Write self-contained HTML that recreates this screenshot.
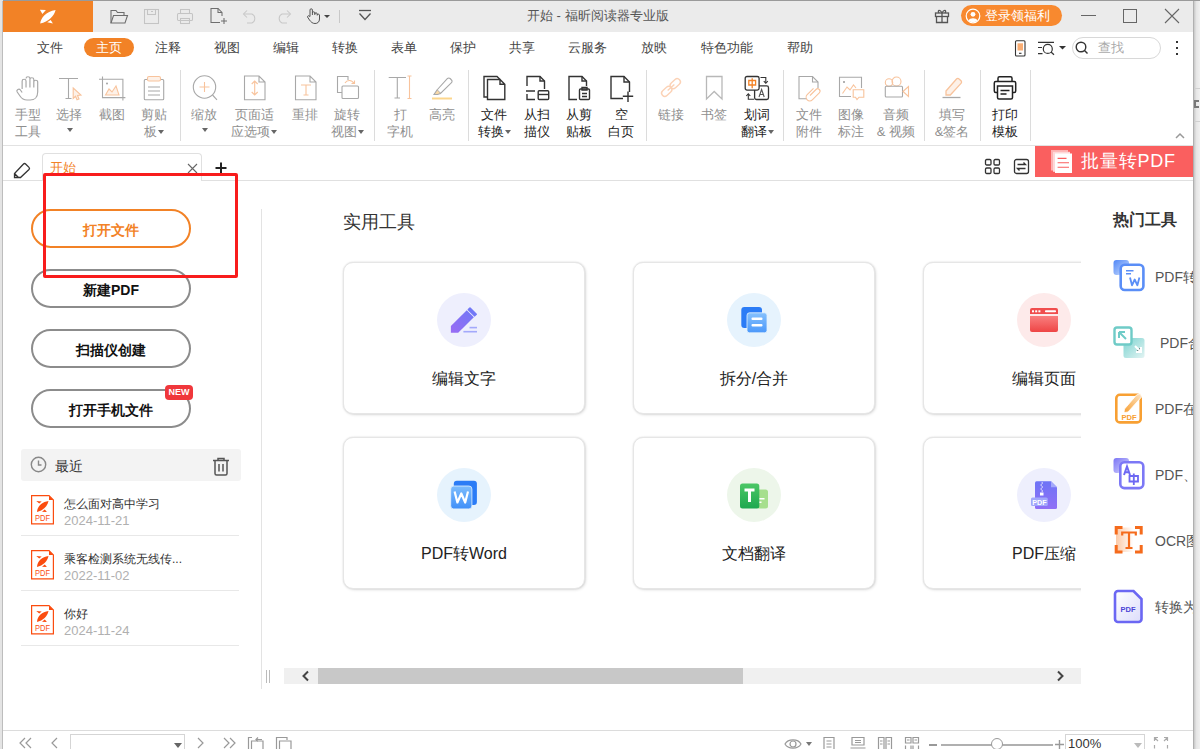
<!DOCTYPE html>
<html><head><meta charset="utf-8">
<style>
*{margin:0;padding:0;box-sizing:border-box}
html,body{width:1200px;height:749px;overflow:hidden;background:#f2f2f2;font-family:"Liberation Sans",sans-serif;color:#333}
.a{position:absolute}
.t{position:absolute;white-space:nowrap;line-height:1}
#win{position:absolute;left:3px;top:1px;width:1190px;height:748px;background:#fff;overflow:hidden}
#title{position:absolute;left:0;top:0;width:1190px;height:30px;background:#ebebeb}
#logo{position:absolute;left:0;top:0;width:90px;height:30px;background:#f28226}
.menu{font-size:13px;color:#444;top:41px}
.sep{position:absolute;width:1px;background:#dcdcdc;top:70px;height:71px}
.rl{position:absolute;font-size:13px;line-height:17px;text-align:center;color:#8f8f8f;white-space:nowrap}
.rl.on{color:#222}
.dd{display:inline-block;width:0;height:0;border-left:3.5px solid transparent;border-right:3.5px solid transparent;border-top:4px solid #666;vertical-align:middle;margin-left:1px;position:relative;top:-1px}
.card{position:absolute;width:242px;height:152px;border:1px solid #e6e6e6;border-radius:10px;background:#fff;box-shadow:0 0 2px rgba(0,0,0,.12),1px 1px 3px rgba(0,0,0,.12)}
.circ{position:absolute;left:93px;top:30px;width:54px;height:54px;border-radius:50%}
.clab{position:absolute;left:0;width:240px;top:107px;text-align:center;font-size:16px;color:#222;line-height:18px}
.btn{position:absolute;left:28px;width:160px;height:39px;border:2px solid #8c8c8c;border-radius:20px;text-align:center;font-size:14px;font-weight:bold;color:#111;line-height:38px}
.ri{position:absolute;left:18px;width:218px;height:55px;border-bottom:1px solid #e8e8e8}
.rt{position:absolute;left:43px;top:16px;font-size:12px;color:#333;line-height:14px;white-space:nowrap}
.rd{position:absolute;left:43px;top:33px;font-size:13px;color:#b0b0b0;line-height:14px;white-space:nowrap}
.hot{position:absolute;left:1110px;width:40px;height:40px}
.hl{position:absolute;left:1155px;font-size:14px;color:#555;line-height:16px;white-space:nowrap}
</style></head><body>
<!-- window bg -->
<div class="a" style="left:0;top:0;width:1200px;height:1px;background:#9a9a9a"></div>
<div class="a" style="left:0;top:0;width:3px;height:749px;background:#e4e4e4"></div>
<div class="a" style="left:2px;top:1px;width:1px;height:748px;background:#bdbdbd"></div>
<div class="a" style="left:3px;top:1px;width:1190px;height:748px;background:#fff"></div>
<div class="a" style="left:1193px;top:1px;width:1px;height:748px;background:#b0b0b0"></div>
<div class="a" style="left:1194px;top:1px;width:6px;height:748px;background:#f4f4f4"></div>
<!-- title bar -->
<div class="a" style="left:3px;top:1px;width:1190px;height:31px;background:#ebebeb"></div>
<div class="a" style="left:3px;top:1px;width:90px;height:31px;background:#f28226"></div>
<svg class="a" style="left:33px;top:3px" width="30" height="26" viewBox="0 0 30 26">
 <path d="M6.9 6.7 L12.9 7.1 L9.4 10.9 Z M14.2 19.2 L17.7 17 L19.9 20.6 Z M7.2 20.6 C7.6 15 13 8.3 22.6 6.9 C21.5 12.5 15.5 18.5 7.2 20.6 Z" fill="#fff"/>
</svg>
<!-- quick access icons -->
<svg class="a" style="left:108px;top:7px" width="22" height="18" viewBox="0 0 22 18" fill="none" stroke="#6e6e6e" stroke-width="1.1">
 <path d="M3 16 V3.5 H8 L9.5 5.5 H16 V8.5"/><path d="M3 16 L5.5 8.5 H19.5 L17 16 Z"/>
</svg>
<svg class="a" style="left:143px;top:8px" width="18" height="17" viewBox="0 0 18 17" fill="none" stroke="#c4c4c4" stroke-width="1.05">
 <rect x="1.5" y="1.5" width="14" height="14"/><rect x="4.5" y="1.5" width="8" height="5"/><path d="M8 3.5 H10"/>
</svg>
<svg class="a" style="left:176px;top:8px" width="18" height="17" viewBox="0 0 18 17" fill="none" stroke="#c4c4c4" stroke-width="1.05">
 <rect x="4.5" y="1.5" width="9" height="4"/><rect x="1.5" y="5.5" width="15" height="7" rx="1"/><rect x="4.5" y="10.5" width="9" height="5"/>
</svg>
<svg class="a" style="left:209px;top:7px" width="19" height="18" viewBox="0 0 19 18" fill="none" stroke="#6e6e6e" stroke-width="1.05">
 <path d="M11 15.5 H2 V1.5 H9 L13 5.5 V9"/><path d="M9 1.5 V5.5 H13"/><path d="M15 11 V17 M12 14 H18"/>
</svg>
<svg class="a" style="left:242px;top:8px" width="17" height="17" viewBox="0 0 17 17" fill="none" stroke="#c8c8c8" stroke-width="1.05">
 <path d="M2 6 H10 A5 5 0 0 1 10 15 H5"/><path d="M5 2.5 L1.5 6 L5 9.5"/>
</svg>
<svg class="a" style="left:275px;top:8px" width="17" height="17" viewBox="0 0 17 17" fill="none" stroke="#c8c8c8" stroke-width="1.05">
 <path d="M15 6 H7 A5 5 0 0 0 7 15 H12"/><path d="M12 2.5 L15.5 6 L12 9.5"/>
</svg>
<svg class="a" style="left:306px;top:7px" width="26" height="18" viewBox="0 0 26 18" fill="none" stroke="#555" stroke-width="1.0">
 <path d="M4 9 V3 A1.2 1.2 0 0 1 6.4 3 V8 M6.4 6 A1.2 1.2 0 0 1 8.8 6 V8 M8.8 7 A1.2 1.2 0 0 1 11.2 7 V8.5 M11.2 8 A1.2 1.2 0 0 1 13.5 8 V12 C13.5 15 11.5 16.5 9 16.5 C6.5 16.5 5 15 3.5 13 L1.5 10 A1.2 1.2 0 0 1 3.5 9 L4 10"/>
 <path d="M18 8 H24 L21 11 Z" fill="#444" stroke="none"/>
</svg>
<div class="a" style="left:339px;top:10px;width:1px;height:13px;background:#c8c8c8"></div>
<svg class="a" style="left:358px;top:9px" width="14" height="14" viewBox="0 0 14 14" fill="none" stroke="#555" stroke-width="1.3">
 <path d="M1 1.5 H13"/><path d="M1.5 4.5 L7 10.5 L12.5 4.5"/>
</svg>
<div class="t" style="left:527px;top:9px;font-size:13px;color:#555">开始 - 福昕阅读器专业版</div>
<!-- gift -->
<svg class="a" style="left:934px;top:8px" width="16" height="16" viewBox="0 0 16 16" fill="none" stroke="#555" stroke-width="1.3">
 <rect x="1.5" y="5" width="13" height="3.5"/><path d="M2.5 8.5 V14.5 H13.5 V8.5"/><path d="M8 5 V14.5"/><path d="M8 5 C6 1 3 2 5 5 M8 5 C10 1 13 2 11 5"/>
</svg>
<div class="a" style="left:961px;top:5px;width:101px;height:21px;border-radius:11px;background:#f8892f"></div>
<svg class="a" style="left:965px;top:8px" width="16" height="16" viewBox="0 0 16 16">
 <circle cx="8" cy="8" r="6.8" fill="none" stroke="#fff" stroke-width="1.2"/><circle cx="8" cy="6.3" r="2.4" fill="#fff"/><path d="M3.5 12.5 C5 9.5 11 9.5 12.5 12.5 C11 14.5 5 14.5 3.5 12.5Z" fill="#fff"/>
</svg>
<div class="t" style="left:985px;top:9px;font-size:13px;color:#fff">登录领福利</div>
<div class="a" style="left:1081px;top:15px;width:15px;height:1px;background:#666"></div>
<div class="a" style="left:1123px;top:9px;width:14px;height:14px;border:1px solid #666"></div>
<svg class="a" style="left:1164px;top:8px" width="16" height="16" viewBox="0 0 16 16" stroke="#666" stroke-width="1.1"><path d="M1 1 L15 15 M15 1 L1 15"/></svg>
<!-- menu bar -->
<div class="t menu" style="left:37px">文件</div>
<div class="a" style="left:84px;top:38px;width:50px;height:19px;border-radius:10px;background:#f28226"></div>
<div class="t menu" style="left:96px;color:#fff">主页</div>
<div class="t menu" style="left:155px">注释</div>
<div class="t menu" style="left:214px">视图</div>
<div class="t menu" style="left:273px">编辑</div>
<div class="t menu" style="left:332px">转换</div>
<div class="t menu" style="left:391px">表单</div>
<div class="t menu" style="left:450px">保护</div>
<div class="t menu" style="left:509px">共享</div>
<div class="t menu" style="left:568px">云服务</div>
<div class="t menu" style="left:641px">放映</div>
<div class="t menu" style="left:701px">特色功能</div>
<div class="t menu" style="left:787px">帮助</div>
<!-- menu right -->
<svg class="a" style="left:1014px;top:40px" width="12" height="17" viewBox="0 0 12 17" fill="none" stroke="#333" stroke-width="1.1">
 <rect x="1.5" y="0.8" width="9.5" height="15.2" rx="1"/><rect x="3.5" y="3.3" width="5.5" height="7.2" fill="#f9ad73" stroke="none"/><path d="M5 13.3 H7.5"/>
</svg>
<svg class="a" style="left:1037px;top:40px" width="30" height="16" viewBox="0 0 30 16" fill="none" stroke="#333" stroke-width="1.2">
 <path d="M1 2.3 H17 M1 7.5 H5 M1 13.6 H5.5"/><circle cx="10.8" cy="8.9" r="4.5"/><path d="M14 12 L17 14.8"/>
 <path d="M22 6 H29 L25.5 9.5Z" fill="#333" stroke="none"/>
</svg>
<div class="a" style="left:1072px;top:37px;width:89px;height:22px;border:1px solid #d8d8d8;border-radius:11px"></div>
<svg class="a" style="left:1075px;top:41px" width="14" height="14" viewBox="0 0 14 14" fill="none" stroke="#333" stroke-width="1.4"><circle cx="6" cy="6" r="4.8"/><path d="M9.5 9.5 L12.5 12.5"/></svg>
<div class="t" style="left:1098px;top:41px;font-size:13px;color:#aaa">查找</div>
<div class="a" style="left:1176px;top:41px;width:2px;height:2px;background:#333"></div>
<div class="a" style="left:1176px;top:47px;width:2px;height:2px;background:#333"></div>
<div class="a" style="left:1176px;top:53px;width:2px;height:2px;background:#333"></div>

<!-- ribbon -->
<div class="a" style="left:3px;top:145px;width:1190px;height:1px;background:#e2e2e2"></div>
<div class="sep" style="left:180px"></div>
<div class="sep" style="left:374px"></div>
<div class="sep" style="left:468px"></div>
<div class="sep" style="left:646px"></div>
<div class="sep" style="left:783px"></div>
<div class="sep" style="left:924px"></div>
<div class="sep" style="left:980px"></div>
<div class="sep" style="left:1030px"></div>
<!-- icons: each svg 28x28 at top 75, left cx-14 -->
<svg class="a" style="left:14px;top:75px" width="28" height="28" viewBox="0 0 28 28" fill="none" stroke="#a8a8a8" stroke-width="1.1">
 <path transform="translate(-0.5 0) scale(1.08 1)" d="M8 14 V6 a1.8 1.8 0 0 1 3.6 0 V12.5 M11.6 3.5 a1.8 1.8 0 0 1 3.6 0 V12.5 M15.2 4.5 a1.8 1.8 0 0 1 3.6 0 V12.5 M18.8 7 a1.8 1.8 0 0 1 3.6 0 V17 C22.4 22 19.5 25 15.5 25 H12.5 C9.5 25 7.5 23.5 6 21 L3.3 16.8 a1.8 1.8 0 0 1 3.1 -1.8 L8 17.5"/>
</svg>
<svg class="a" style="left:55px;top:75px" width="28" height="28" viewBox="0 0 28 28" fill="none" stroke="#a8a8a8" stroke-width="1.1">
 <path d="M4 3.5 H23 M13.5 3.5 V23.5 M10.5 23.5 H16.5"/>
 <path d="M18.2 13 L26 20 L22.5 20.5 L24 24 L22 24.8 L20.5 21.3 L18.2 23.5 Z" stroke="#f8c39c" fill="#fdf1e8"/>
</svg>
<svg class="a" style="left:98px;top:75px" width="28" height="28" viewBox="0 0 28 28" fill="none" stroke="#a8a8a8" stroke-width="1.1">
 <path d="M4.5 1.4 V22.6 H27.4 M1 4.2 H24.9 V25.5"/>
 <path d="M7.5 20 L11 14 L14 17 L18 11 L21 20 Z" stroke="#f8c39c" fill="#fdf1e8"/>
 <circle cx="9" cy="8.5" r="0.9" fill="#999" stroke="none"/>
</svg>
<svg class="a" style="left:140px;top:75px" width="28" height="28" viewBox="0 0 28 28" fill="none" stroke="#a8a8a8" stroke-width="1.1">
 <rect x="4.3" y="4.5" width="19.4" height="20.2" rx="1"/>
 <path d="M8 12 H20 M8 16 H20 M8 20 H20"/>
 <rect x="7.5" y="1.5" width="13" height="4.5" rx="1.5" stroke="#f8c39c" fill="#fdf1e8"/>
</svg>
<!-- zoom -->
<svg class="a" style="left:190px;top:75px" width="28" height="28" viewBox="0 0 28 28" fill="none" stroke="#a8a8a8" stroke-width="1.1">
 <circle cx="14.5" cy="12" r="11.2"/><path d="M22.5 20 L27 24.8"/>
 <path d="M14.5 7 V17 M9.5 12 H19.5" stroke="#f8c39c"/>
</svg>
<svg class="a" style="left:240px;top:75px" width="28" height="28" viewBox="0 0 28 28" fill="none" stroke="#a8a8a8" stroke-width="1.1">
 <path d="M4.5 1 H19 L25 7 V24.8 H4.5 Z M19 1 V7 H25"/>
 <path d="M14.7 6 V20 M11.7 9 L14.7 6 L17.7 9 M11.7 17 L14.7 20 L17.7 17" stroke="#f8c39c"/>
</svg>
<svg class="a" style="left:291px;top:75px" width="28" height="28" viewBox="0 0 28 28" fill="none" stroke="#a8a8a8" stroke-width="1.1">
 <path d="M4.5 1 H19 L25 7 V24.8 H4.5 Z M19 1 V7 H25"/>
 <path d="M10 10 H20 M15 10 V20 M12.5 20 H17.5" stroke="#f8c39c"/>
</svg>
<svg class="a" style="left:333px;top:75px" width="28" height="28" viewBox="0 0 28 28" fill="none" stroke="#a8a8a8" stroke-width="1.1">
 <path d="M9 17.5 H4.5 V1.5 H15 V5"/>
 <rect x="9" y="11" width="16.5" height="12.5" rx="1"/>
 <path d="M12 8 C14 4.5 19 4.5 21 8.5 M18.5 8.5 H21.5 V5.5" stroke="#f8c39c"/>
</svg>
<!-- typewriter -->
<svg class="a" style="left:386px;top:75px" width="28" height="28" viewBox="0 0 28 28" fill="none" stroke="#a8a8a8" stroke-width="1.1">
 <path d="M2.7 2.5 H20 M11.3 2.5 V23 M8.5 23 H14"/>
 <path d="M23.5 1 V23.5 M21.5 1 H25.5 M21.5 23.5 H25.5" stroke="#f8c39c"/>
</svg>
<svg class="a" style="left:428px;top:75px" width="28" height="28" viewBox="0 0 28 28" fill="none" stroke="#a8a8a8" stroke-width="1.1">
 <path d="M9 15 L19.5 3.5 a1.8 1.8 0 0 1 2.6 0 L23.5 5 a1.8 1.8 0 0 1 0 2.6 L12.5 18.5 Z"/>
 <path d="M9 15 L6 19.5 L9.5 19.5 L12.5 18.5" fill="#f9d9a8"/>
 <path d="M4 23.5 H24" stroke="#fcd68d" stroke-width="2"/>
</svg>
<!-- file convert -->
<svg class="a" style="left:480px;top:75px" width="28" height="28" viewBox="0 0 28 28" fill="none" stroke="#333" stroke-width="1.4">
 <path d="M7 22 H4 V1.5 H17 L20 4.5"/>
 <path d="M7.5 4.5 H20 L24.8 9.3 V24.5 H7.5 Z M20 4.5 V9.3 H24.8"/>
</svg>
<svg class="a" style="left:523px;top:75px" width="28" height="28" viewBox="0 0 28 28" fill="none" stroke="#333" stroke-width="1.4">
 <path d="M4 11 V1.5 H17 L21.5 6 V14"/><path d="M17 1.5 V6 H21.5"/>
 <path d="M3 16 H12 M4 19 V24.5 H12"/>
 <rect x="15.2" y="15.8" width="10.5" height="8.7" rx="1"/><path d="M15.2 19.5 H25.7"/>
</svg>
<svg class="a" style="left:565px;top:75px" width="28" height="28" viewBox="0 0 28 28" fill="none" stroke="#333" stroke-width="1.4">
 <path d="M12 24.5 H4 V1.5 H17 L21.5 6 V11"/><path d="M17 1.5 V6 H21.5"/>
 <rect x="14.5" y="14" width="10" height="10.5" rx="1"/><path d="M17 12.5 H22 V15 H17 Z M17 18.5 H22 M17 21.5 H22"/>
</svg>
<svg class="a" style="left:607px;top:75px" width="28" height="28" viewBox="0 0 28 28" fill="none" stroke="#333" stroke-width="1.4">
 <path d="M16 23.5 H4 V1.5 H17 L22.5 7 V17"/><path d="M17 1.5 V7 H22.5"/>
 <path d="M21 16.5 V27 M15.8 21.2 H26.2"/>
</svg>
<!-- link -->
<svg class="a" style="left:657px;top:75px" width="28" height="28" viewBox="0 0 28 28" fill="none" stroke="#fbd2b6" stroke-width="1.4">
 <g transform="rotate(-42 14 12.5)"><rect x="2.5" y="9.3" width="11.5" height="6.4" rx="3.2"/><rect x="14" y="9.3" width="11.5" height="6.4" rx="3.2"/><path d="M9.5 12.5 H18.5"/></g>
</svg>
<svg class="a" style="left:700px;top:75px" width="28" height="28" viewBox="0 0 28 28" fill="none" stroke="#b8b8b8" stroke-width="1.3">
 <path d="M6.5 1.5 H22 V24 L14.2 16.5 L6.5 24 Z"/>
</svg>
<svg class="a" style="left:743px;top:75px" width="28" height="28" viewBox="0 0 28 28" fill="none" stroke="#333" stroke-width="1.3">
 <rect x="11.6" y="10.9" width="13.9" height="13.6" rx="1.8"/>
 <path d="M16 22 L18.6 14.5 L21.2 22 M17 19.5 H20.2" stroke="#555" stroke-width="1.1"/>
 <rect x="2.2" y="1.5" width="13.9" height="13.6" rx="1.8" fill="#fff"/>
 <path d="M5.8 5.5 H12.6 V10 H5.8 Z M9.2 3.3 V13.2" stroke="#f28226" stroke-width="1.3"/>
 <path d="M17.5 2.5 H22.8 V8" stroke-width="1.1"/><path d="M20.8 6.2 L22.8 8.3 L24.8 6.2" stroke-width="1.1"/>
 <path d="M11 24.3 H5.3 V19" stroke-width="1.1"/><path d="M3.3 21 L5.3 18.8 L7.3 21" stroke-width="1.1"/>
</svg>
<!-- attachment -->
<svg class="a" style="left:795px;top:75px" width="28" height="28" viewBox="0 0 28 28" fill="none" stroke="#a8a8a8" stroke-width="1.1">
 <path d="M12 23.8 H4 V1.5 H17.5 L23 7 V13"/><path d="M17.5 1.5 V7 H23"/>
 <path d="M15 20.5 L21 14.5 a2.3 2.3 0 0 1 3.3 3.3 L17.3 24.8 a3.6 3.6 0 0 1 -5.1 -5.1 L18.5 13.4" stroke="#f8c39c"/>
</svg>
<svg class="a" style="left:837px;top:75px" width="28" height="28" viewBox="0 0 28 28" fill="none" stroke="#a8a8a8" stroke-width="1.1">
 <path d="M14 21.5 H2.5 V2.3 H24.5 V13"/>
 <circle cx="7" cy="7" r="1" fill="#999" stroke="none"/>
 <path d="M5.5 18.5 L10 12 L13 15 L16.5 10 L19 13" stroke="#f8c39c"/>
 <path d="M16.2 14.8 H26.8 V22.2 H22 L20 24.5 L18.5 22.2 H16.2 Z" stroke="#f8c39c" fill="#fff"/>
</svg>
<svg class="a" style="left:882px;top:75px" width="28" height="28" viewBox="0 0 28 28" fill="none" stroke="#a8a8a8" stroke-width="1.1">
 <circle cx="7" cy="7.5" r="3.7" stroke="#f8c39c"/><circle cx="14.5" cy="6.5" r="4.5" stroke="#f8c39c"/>
 <rect x="3.3" y="11.2" width="17.2" height="10.8" rx="1"/>
 <path d="M21 16.5 L26.5 11.5 V21.5 Z" stroke="#f8c39c"/>
</svg>
<svg class="a" style="left:938px;top:75px" width="28" height="28" viewBox="0 0 28 28" fill="none" stroke="#f8c39c" stroke-width="1.3">
 <path d="M8 16 L18.5 4 a1.8 1.8 0 0 1 2.6 0 L23 5.8 a1.8 1.8 0 0 1 0 2.6 L12.3 20 H8 Z" fill="#fdf1e8"/>
 <path d="M4.5 22.5 H22.5" stroke="#a8a8a8"/>
</svg>
<svg class="a" style="left:991px;top:75px" width="28" height="28" viewBox="0 0 28 28" fill="none" stroke="#222" stroke-width="1.5">
 <path d="M7 6.5 V3.2 a1.5 1.5 0 0 1 1.5 -1.5 H19.5 a1.5 1.5 0 0 1 1.5 1.5 V6.5"/>
 <path d="M6.5 17.5 H4.8 a1.5 1.5 0 0 1 -1.5 -1.5 V8 a1.5 1.5 0 0 1 1.5 -1.5 H23.2 a1.5 1.5 0 0 1 1.5 1.5 V16 a1.5 1.5 0 0 1 -1.5 1.5 H21.5"/>
 <path d="M6.5 11 H21.5 V22.5 a1.5 1.5 0 0 1 -1.5 1.5 H8 a1.5 1.5 0 0 1 -1.5 -1.5 Z"/>
 <path d="M9.5 15.5 H18.5 M9.5 19 H15.5"/>
</svg>
<!-- labels -->
<div class="rl" style="left:8px;top:106px;width:40px">手型<br>工具</div>
<div class="rl" style="left:49px;top:106px;width:40px">选择<br><span class="dd" style="top:-3px"></span></div>
<div class="rl" style="left:92px;top:106px;width:40px">截图</div>
<div class="rl" style="left:134px;top:106px;width:40px">剪贴<br>板<span class="dd"></span></div>
<div class="rl" style="left:184px;top:106px;width:40px">缩放<br><span class="dd" style="top:-3px"></span></div>
<div class="rl" style="left:224px;top:106px;width:60px">页面适<br>应选项<span class="dd"></span></div>
<div class="rl" style="left:285px;top:106px;width:40px">重排</div>
<div class="rl" style="left:322px;top:106px;width:50px">旋转<br>视图<span class="dd"></span></div>
<div class="rl" style="left:380px;top:106px;width:40px">打<br>字机</div>
<div class="rl" style="left:422px;top:106px;width:40px">高亮</div>
<div class="rl on" style="left:469px;top:106px;width:50px">文件<br>转换<span class="dd"></span></div>
<div class="rl on" style="left:517px;top:106px;width:40px">从扫<br>描仪</div>
<div class="rl on" style="left:559px;top:106px;width:40px">从剪<br>贴板</div>
<div class="rl on" style="left:601px;top:106px;width:40px">空<br>白页</div>
<div class="rl" style="left:651px;top:106px;width:40px">链接</div>
<div class="rl" style="left:694px;top:106px;width:40px">书签</div>
<div class="rl on" style="left:732px;top:106px;width:50px">划词<br>翻译<span class="dd"></span></div>
<div class="rl" style="left:789px;top:106px;width:40px">文件<br>附件</div>
<div class="rl" style="left:831px;top:106px;width:40px">图像<br>标注</div>
<div class="rl" style="left:866px;top:106px;width:60px">音频<br>&amp; 视频</div>
<div class="rl" style="left:927px;top:106px;width:50px">填写<br>&amp;签名</div>
<div class="rl on" style="left:985px;top:106px;width:40px">打印<br>模板</div>
<svg class="a" style="left:1174px;top:132px" width="12" height="8" viewBox="0 0 12 8" fill="none" stroke="#999" stroke-width="1.5"><path d="M2 6 L6 2 L10 6"/></svg>

<!-- tab bar -->
<div class="a" style="left:3px;top:180px;width:1190px;height:1px;background:#e0e0e0"></div>
<svg class="a" style="left:12px;top:160px" width="20" height="20" viewBox="0 0 20 20" fill="none" stroke="#333" stroke-width="1.3">
 <path d="M2.5 17.5 V13.5 L11.5 4 a1.5 1.5 0 0 1 2.1 0 L17 7.4 a1.5 1.5 0 0 1 0 2.1 L8.5 17.5 Z M2.5 13.5 L6.5 17.5"/>
</svg>
<div class="a" style="left:42px;top:153px;width:160px;height:28px;border:1px solid #e0e0e0;border-bottom:none;border-radius:4px 4px 0 0;background:#fff"></div>
<div class="t" style="left:50px;top:161px;font-size:13px;color:#f28226">开始</div>
<svg class="a" style="left:187px;top:163px" width="11" height="11" viewBox="0 0 11 11" stroke="#666" stroke-width="1.1"><path d="M1 1 L10 10 M10 1 L1 10"/></svg>
<svg class="a" style="left:215px;top:162px" width="12" height="12" viewBox="0 0 12 12" stroke="#222" stroke-width="2"><path d="M6 0.5 V11.5 M0.5 6 H11.5"/></svg>
<!-- right tab icons -->
<svg class="a" style="left:984px;top:158px" width="17" height="17" viewBox="0 0 17 17" fill="none" stroke="#333" stroke-width="1.3">
 <rect x="1.5" y="1.5" width="5.5" height="5.5" rx="1.2"/><rect x="10" y="1.5" width="5.5" height="5.5" rx="1.2"/>
 <rect x="1.5" y="10" width="5.5" height="5.5" rx="1.2"/><rect x="10" y="10" width="5.5" height="5.5" rx="1.2"/>
</svg>
<svg class="a" style="left:1013px;top:158px" width="17" height="17" viewBox="0 0 17 17" fill="none" stroke="#333" stroke-width="1.3">
 <rect x="1.5" y="1.5" width="14" height="14" rx="2"/><path d="M4.5 6.5 H12.5 L10.5 4.5 M12.5 10.5 H4.5 L6.5 12.5"/>
</svg>
<div class="a" style="left:1035px;top:146px;width:158px;height:31px;background:#fa5f5f"></div>
<svg class="a" style="left:1050px;top:150px" width="24" height="24" viewBox="0 0 24 24">
 <rect x="1" y="0" width="17" height="20.5" fill="#fdb3b3"/>
 <rect x="3" y="1.8" width="17" height="20" fill="#fed8d8"/>
 <rect x="5" y="3.5" width="17" height="19.5" fill="#fff"/>
 <path d="M7.6 8.4 H16.5 M7.6 12.7 H19 M7.6 17.2 H19" stroke="#fa5f5f" stroke-width="1.1"/>
</svg>
<div class="t" style="left:1081px;top:152px;font-size:18px;color:#fff;letter-spacing:0.8px">批量转PDF</div>
<!-- red annotation rect -->
<div class="a" style="left:43px;top:173px;width:195px;height:105px;border:3px solid #f81c1c;border-radius:2px;z-index:10"></div>
<!-- left panel -->
<div class="a" style="left:261px;top:209px;width:1px;height:480px;background:#e3e3e3"></div>
<div class="btn" style="left:31px;top:209px;border-color:#f28226;color:#f28226;font-size:14px">打开文件</div>
<div class="btn" style="left:31px;top:269px">新建PDF</div>
<div class="btn" style="left:31px;top:329px">扫描仪创建</div>
<div class="btn" style="left:31px;top:389px">打开手机文件</div>
<div class="a" style="left:165px;top:385px;width:28px;height:15px;border-radius:4px;background:#f0373b;color:#fff;font-size:9px;font-weight:bold;line-height:15px;text-align:center">NEW</div>
<div class="a" style="left:21px;top:449px;width:220px;height:32px;border-radius:3px;background:#f3f3f3"></div>
<svg class="a" style="left:30px;top:456px" width="17" height="17" viewBox="0 0 17 17" fill="none" stroke="#888" stroke-width="1.4">
 <circle cx="8.5" cy="8.5" r="7.2"/><path d="M8.5 4.5 V9 H11.5"/>
</svg>
<div class="t" style="left:55px;top:459px;font-size:14px;color:#333">最近</div>
<svg class="a" style="left:212px;top:457px" width="18" height="19" viewBox="0 0 18 19" fill="none" stroke="#555" stroke-width="1.5">
 <path d="M1 3.5 H17 M6 3.5 V1.5 H12 V3.5"/><path d="M3 3.5 V16.5 a1.5 1.5 0 0 0 1.5 1.5 H13.5 a1.5 1.5 0 0 0 1.5 -1.5 V3.5"/><path d="M7 7 V14.5 M11 7 V14.5"/>
</svg>


<!-- content -->
<div class="t" style="left:343px;top:213px;font-size:18px;color:#333">实用工具</div>
<div class="a" style="left:262px;top:181px;width:819px;height:480px;overflow:hidden">
 <div class="card" style="left:81px;top:81px">
  <div class="circ" style="background:#eeeffd"><svg width="54" height="54" viewBox="0 0 54 54">
   <defs><linearGradient id="gp" x1="0" y1="1" x2="1" y2="0"><stop offset="0" stop-color="#9a6cf4"/><stop offset="1" stop-color="#6f78f6"/></linearGradient></defs>
   <path d="M13.9 33 L29.75 17.15 L36.8 24.2 L21.2 39.8 L13.9 39.8 Z" fill="url(#gp)"/>
   <path d="M31.4 16.6 L33 15 L39.2 21.2 L37.6 22.8 Z" fill="#7278f6" stroke="#7278f6" stroke-width="1.6" stroke-linejoin="round"/>
   <rect x="32.5" y="33.8" width="7.5" height="1.6" fill="#a3a9fb"/><rect x="26.4" y="37.9" width="13.6" height="1.6" fill="#a3a9fb"/>
  </svg></div>
  <div class="clab">编辑文字</div>
 </div>
 <div class="card" style="left:371px;top:81px">
  <div class="circ" style="background:#e6f3fd"><svg width="54" height="54" viewBox="0 0 54 54">
   <defs><linearGradient id="gb" x1="0" y1="0" x2="0" y2="1"><stop offset="0" stop-color="#86c1fd"/><stop offset="1" stop-color="#4b98fa"/></linearGradient></defs>
   <rect x="14.3" y="14" width="20.7" height="21" rx="3" fill="#2b7cf6"/>
   <rect x="20" y="19.8" width="20" height="20" rx="2.5" fill="url(#gb)" stroke="#e6f3fd" stroke-width="0.8"/>
   <rect x="24.5" y="24.5" width="11" height="2.6" rx="1" fill="#fff"/><rect x="24.5" y="31" width="11" height="2.6" rx="1" fill="#fff"/>
  </svg></div>
  <div class="clab">拆分/合并</div>
 </div>
 <div class="card" style="left:661px;top:81px">
  <div class="circ" style="background:#fdeaea"><svg width="54" height="54" viewBox="0 0 54 54">
   <defs><linearGradient id="gr" x1="0" y1="0" x2="0" y2="1"><stop offset="0" stop-color="#f97f7f"/><stop offset="1" stop-color="#ee4545"/></linearGradient></defs>
   <path d="M13 17 a2 2 0 0 1 2 -2 H39 a2 2 0 0 1 2 2 V21 H13 Z" fill="#f04d4d"/>
   <path d="M13 23 H41 V37 a2 2 0 0 1 -2 2 H15 a2 2 0 0 1 -2 -2 Z" fill="url(#gr)"/>
   <rect x="15" y="17.3" width="2" height="2" fill="#fff"/><rect x="18.2" y="17.3" width="2" height="2" fill="#fff"/><rect x="21.4" y="17.3" width="2" height="2" fill="#fff"/>
   <rect x="28" y="17.3" width="11" height="2" rx="0.8" fill="#fff"/>
  </svg></div>
  <div class="clab">编辑页面</div>
 </div>
 <div class="card" style="left:81px;top:256px">
  <div class="circ" style="background:#e6f3fd"><svg width="54" height="54" viewBox="0 0 54 54">
   <defs><linearGradient id="gw" x1="0" y1="0" x2="0" y2="1"><stop offset="0" stop-color="#7dbdfd"/><stop offset="1" stop-color="#3f8ff8"/></linearGradient></defs>
   <rect x="16.8" y="12.8" width="23.1" height="24.2" rx="3" fill="#2b7cf6"/>
   <rect x="13.7" y="18" width="21.2" height="22.9" rx="3" fill="url(#gw)" stroke="#e6f3fd" stroke-width="0.8"/>
   <path d="M17.6 23.5 L20.4 34.5 L24.3 25.5 L28.2 34.5 L31 23.5" fill="none" stroke="#fff" stroke-width="2.2" stroke-linejoin="round"/>
  </svg></div>
  <div class="clab">PDF转Word</div>
 </div>
 <div class="card" style="left:371px;top:256px">
  <div class="circ" style="background:#edf6ea"><svg width="54" height="54" viewBox="0 0 54 54">
   <defs><linearGradient id="gg" x1="0" y1="0" x2="0" y2="1"><stop offset="0" stop-color="#4cc766"/><stop offset="1" stop-color="#1ea84f"/></linearGradient></defs>
   <rect x="29" y="21.5" width="12" height="19" rx="2.5" fill="#a6df8d"/>
   <rect x="31.5" y="30" width="6" height="1.5" fill="#fff"/><rect x="31.5" y="33.5" width="3" height="1.5" fill="#fff"/>
   <rect x="13" y="15.4" width="19.3" height="25" rx="2.5" fill="url(#gg)"/>
   <path d="M17.5 22 H27.5 M22.5 22 V34" stroke="#fff" stroke-width="3"/>
  </svg></div>
  <div class="clab">文档翻译</div>
 </div>
 <div class="card" style="left:661px;top:256px">
  <div class="circ" style="background:#eeeffd"><svg width="54" height="54" viewBox="0 0 54 54">
   <defs><linearGradient id="gz" x1="0" y1="0" x2="0" y2="1"><stop offset="0" stop-color="#6d74f6"/><stop offset="1" stop-color="#9170f6"/></linearGradient></defs>
   <path d="M19.5 13.2 H34 L40 19.2 V39.5 a1.5 1.5 0 0 1 -1.5 1.5 H19.5 a1.5 1.5 0 0 1 -1.5 -1.5 V14.7 a1.5 1.5 0 0 1 1.5 -1.5 Z" fill="url(#gz)"/>
   <path d="M34 13.2 L40 19.2 H34 Z" fill="#a4a9fb"/>
   <path d="M24.5 15 H26 M23.5 17 H25 M24.5 19 H26 M23.5 21 H25 M24.5 23 H26" stroke="#fff" stroke-width="1.2"/>
   <rect x="23" y="24.5" width="3.5" height="3" fill="#fff"/>
   <rect x="14" y="29.4" width="16.8" height="8.6" rx="1.5" fill="#a1a7fb"/>
   <text x="22.4" y="36.6" text-anchor="middle" font-family="Liberation Sans" font-size="7.2" font-weight="bold" fill="#fff">PDF</text>
  </svg></div>
  <div class="clab">PDF压缩</div>
 </div>
</div>
<!-- right hot panel -->
<div class="t" style="left:1113px;top:212px;font-size:16px;font-weight:bold;color:#333">热门工具</div>
<svg class="a" style="left:1111px;top:258px" width="36" height="36" viewBox="0 0 36 36">
 <defs><linearGradient id="h1" x1="0" y1="0" x2="1" y2="1"><stop offset="0" stop-color="#4f86f7"/><stop offset="0.6" stop-color="#9dbdfb"/><stop offset="1" stop-color="#fff" stop-opacity="0"/></linearGradient></defs>
 <rect x="2.5" y="2" width="15.5" height="15" rx="3" fill="url(#h1)"/>
 <rect x="9.7" y="6.8" width="22.7" height="25.2" rx="4" fill="#fff" stroke="#5a8ef7" stroke-width="2.6"/>
 <path d="M15 12.7 H22.5 M15 15.7 H20" stroke="#5a8ef7" stroke-width="1.5"/>
 <path d="M19 19.5 L21 27.3 L23.7 21.5 L26.4 27.3 L28.4 19.5" fill="none" stroke="#5a8ef7" stroke-width="1.8" stroke-linejoin="round"/>
</svg>
<div class="hl" style="top:269px">PDF转Word</div>
<svg class="a" style="left:1111px;top:324px" width="36" height="36" viewBox="0 0 36 36">
 <defs><linearGradient id="h2" x1="0" y1="0" x2="1" y2="1"><stop offset="0" stop-color="#7bd3d0"/><stop offset="1" stop-color="#e3f4f3"/></linearGradient></defs>
 <rect x="12.5" y="14" width="21" height="20" rx="2.5" fill="url(#h2)"/>
 <rect x="3.5" y="3.5" width="17" height="17" rx="2.5" fill="#fff" stroke="#6fcbc7" stroke-width="2.4"/>
 <path d="M8 8 H14 M8 8 V14 M8 8 L15 15" stroke="#6fcbc7" stroke-width="2"/>
 <path d="M24 22 L30 28 M30 23 V28 H25" stroke="#fff" stroke-width="2"/>
</svg>
<div class="hl" style="top:335px;left:1160px">PDF合并</div>
<svg class="a" style="left:1111px;top:390px" width="36" height="36" viewBox="0 0 36 36">
 <defs><linearGradient id="h3" x1="0" y1="1" x2="1" y2="0"><stop offset="0" stop-color="#f8a033"/><stop offset="1" stop-color="#fde4c4"/></linearGradient></defs>
 <rect x="5.3" y="4.8" width="24.4" height="27.6" rx="3.5" fill="#fff" stroke="#f8a033" stroke-width="2.6"/>
 <path d="M13.5 19 L25.5 5 L29.5 3.5 L30.5 7 L17 22 L13 22.5 Z" fill="url(#h3)" stroke="#fff" stroke-width="0.8"/>
 <text x="18" y="30" text-anchor="middle" font-family="Liberation Sans" font-size="7.6" font-weight="bold" fill="#f8a033">PDF</text>
</svg>
<div class="hl" style="top:401px">PDF在线编辑</div>
<svg class="a" style="left:1111px;top:456px" width="36" height="36" viewBox="0 0 36 36">
 <defs><linearGradient id="h4" x1="0" y1="0" x2="1" y2="1"><stop offset="0" stop-color="#7a74f5"/><stop offset="0.6" stop-color="#b3b0fa"/><stop offset="1" stop-color="#fff" stop-opacity="0"/></linearGradient></defs>
 <rect x="2.5" y="2" width="15.5" height="15" rx="3" fill="url(#h4)"/>
 <rect x="9.3" y="6.3" width="23" height="25.8" rx="4" fill="#fff" stroke="#7c78f6" stroke-width="2.6"/>
 <path d="M13 19 L16 10.5 L19 19 M14 16.3 H18" fill="none" stroke="#6d68f3" stroke-width="2"/>
 <path d="M18.5 20 H27 V25.5 H18.5 Z M22.8 17.5 V29" fill="none" stroke="#6d68f3" stroke-width="1.8"/>
</svg>
<div class="hl" style="top:467px">PDF、翻译</div>
<svg class="a" style="left:1111px;top:522px" width="36" height="36" viewBox="0 0 36 36">
 <defs><linearGradient id="h5" x1="0" y1="0" x2="1" y2="0"><stop offset="0" stop-color="#fcc9a6"/><stop offset="0.7" stop-color="#fff"/></linearGradient></defs>
 <rect x="5" y="5.5" width="25" height="24.5" fill="url(#h5)"/>
 <path d="M5.2 12.5 V5.5 H11.5 M24 5.5 H30.2 V12.5 M30.2 23 V30 H24 M11.5 30 H5.2 V23" fill="none" stroke="#f56b1c" stroke-width="3"/>
 <path d="M11.2 13.5 V10.5 H24.8 V13.5 M18 10.5 V26 M14.5 26 H21.5" fill="none" stroke="#f56b1c" stroke-width="2.2"/>
</svg>
<div class="hl" style="top:533px">OCR图片识别</div>
<svg class="a" style="left:1111px;top:588px" width="36" height="36" viewBox="0 0 36 36">
 <defs><linearGradient id="h6" x1="0" y1="0" x2="1" y2="1"><stop offset="0" stop-color="#fff"/><stop offset="1" stop-color="#dcdcfb"/></linearGradient></defs>
 <path d="M7 3 H22.5 L30.5 11 V31 a3 3 0 0 1 -3 3 H7 a3 3 0 0 1 -3 -3 V6 a3 3 0 0 1 3 -3 Z" fill="url(#h6)" stroke="#6b67f3" stroke-width="2.6"/>
 <text x="17" y="24" text-anchor="middle" font-family="Liberation Sans" font-size="7.5" font-weight="bold" fill="#4b46d6">PDF</text>
</svg>
<div class="hl" style="top:599px">转换为PDF</div>
<!-- right edge cover -->
<div class="a" style="left:1193px;top:31px;width:1px;height:718px;background:#b0b0b0;z-index:5"></div>
<div class="a" style="left:1194px;top:1px;width:6px;height:748px;background:linear-gradient(90deg,#c8c8c8,#e6e6e6 40%,#f0f0f0);z-index:5"></div>
<!-- scrollbar -->
<div class="a" style="left:266px;top:670px;width:1px;height:13px;background:#bbb"></div>
<div class="a" style="left:269px;top:670px;width:1px;height:13px;background:#bbb"></div>
<div class="a" style="left:284px;top:668px;width:797px;height:16px;background:#f0f0f0"></div>
<div class="a" style="left:318px;top:668px;width:425px;height:16px;background:#c8c8c8"></div>
<svg class="a" style="left:300px;top:670px" width="12" height="12" viewBox="0 0 12 12" fill="none" stroke="#444" stroke-width="2"><path d="M8 1.5 L3.5 6 L8 10.5"/></svg>
<svg class="a" style="left:1054px;top:670px" width="12" height="12" viewBox="0 0 12 12" fill="none" stroke="#444" stroke-width="2"><path d="M4 1.5 L8.5 6 L4 10.5"/></svg>
<!-- status bar -->
<div class="a" style="left:3px;top:730px;width:1190px;height:1px;background:#dcdcdc"></div>
<svg class="a" style="left:18px;top:737px" width="16" height="12" viewBox="0 0 16 12" fill="none" stroke="#999" stroke-width="1.2"><path d="M7 1 L2 6 L7 11 M13 1 L8 6 L13 11"/></svg>
<svg class="a" style="left:50px;top:737px" width="10" height="12" viewBox="0 0 10 12" fill="none" stroke="#999" stroke-width="1.2"><path d="M7 1 L2 6 L7 11"/></svg>
<div class="a" style="left:70px;top:734px;width:115px;height:20px;border:1px solid #d5d5d5"></div>
<svg class="a" style="left:174px;top:743px" width="8" height="5" viewBox="0 0 8 5"><path d="M0 0 H8 L4 5Z" fill="#666"/></svg>
<svg class="a" style="left:195px;top:737px" width="10" height="12" viewBox="0 0 10 12" fill="none" stroke="#999" stroke-width="1.2"><path d="M3 1 L8 6 L3 11"/></svg>
<svg class="a" style="left:221px;top:737px" width="16" height="12" viewBox="0 0 16 12" fill="none" stroke="#999" stroke-width="1.2"><path d="M3 1 L8 6 L3 11 M9 1 L14 6 L9 11"/></svg>
<svg class="a" style="left:247px;top:736px" width="18" height="13" viewBox="0 0 18 13" fill="none" stroke="#999" stroke-width="1.2"><path d="M1.5 13 V1.5 H5 M4.5 13 V5 H16 V13 M9 3.5 H15 M11 1.5 L9 3.5 L11 5.5"/></svg>
<svg class="a" style="left:275px;top:736px" width="18" height="13" viewBox="0 0 18 13" fill="none" stroke="#999" stroke-width="1.2"><path d="M1.5 13 V1.5 H12 V4 M4.5 13 V5 H16 V13"/></svg>
<svg class="a" style="left:784px;top:737px" width="30" height="12" viewBox="0 0 30 12" fill="none" stroke="#999" stroke-width="1.2"><path d="M1 7 C4 1.5 14 1.5 17 7 C14 12.5 4 12.5 1 7 Z"/><circle cx="9" cy="7" r="3"/><path d="M22 5 H28 L25 9Z" fill="#777" stroke="none"/></svg>
<svg class="a" style="left:822px;top:736px" width="14" height="13" viewBox="0 0 14 13" fill="none" stroke="#999" stroke-width="1.2"><path d="M2 13 V1.5 H12 V13 M4.5 5 H9.5 M4.5 8 H9.5 M4.5 11 H9.5"/></svg>
<svg class="a" style="left:850px;top:736px" width="16" height="13" viewBox="0 0 16 13" fill="none" stroke="#999" stroke-width="1.2"><path d="M2 1.5 H14 V9 H2 Z M0.5 12 H15.5 M5 4.5 H11 M5 6.5 H11"/></svg>
<svg class="a" style="left:877px;top:736px" width="16" height="13" viewBox="0 0 16 13" fill="none" stroke="#999" stroke-width="1.2"><path d="M1.5 13 V1.5 H7 V13 M9 13 V1.5 H14.5 V13 M3 5 H5.5 M3 8 H5.5 M10.5 5 H13 M10.5 8 H13"/></svg>
<svg class="a" style="left:904px;top:736px" width="16" height="13" viewBox="0 0 16 13" fill="none" stroke="#999" stroke-width="1.2"><path d="M1.5 1.5 H7 V7 H1.5 Z M9 1.5 H14.5 V7 H9 Z M1.5 13 V9.5 M7 13 V9.5 M9 13 V9.5 M14.5 13 V9.5 M3 4 H5.5 M10.5 4 H13"/></svg>
<div class="a" style="left:929px;top:744px;width:8px;height:1.5px;background:#999"></div>
<div class="a" style="left:941px;top:744px;width:112px;height:2px;background:#b0b0b0"></div>
<div class="a" style="left:991px;top:738px;width:12px;height:12px;border-radius:50%;border:1px solid #999;background:#fff"></div>
<svg class="a" style="left:1055px;top:740px" width="9" height="9" viewBox="0 0 9 9" stroke="#999" stroke-width="1.4"><path d="M4.5 0 V9 M0 4.5 H9"/></svg>
<div class="a" style="left:1065px;top:734px;width:80px;height:20px;border:1px solid #d5d5d5"></div>
<div class="t" style="left:1068px;top:737px;font-size:13px;color:#333">100%</div>
<svg class="a" style="left:1134px;top:743px" width="8" height="5" viewBox="0 0 8 5"><path d="M0 0 H8 L4 5Z" fill="#bbb"/></svg>
<svg class="a" style="left:1153px;top:736px" width="16" height="13" viewBox="0 0 16 13" fill="none" stroke="#aaa" stroke-width="1.2"><path d="M1.5 5 V1.5 H5 M1.5 1.5 L5 5 M14.5 5 V1.5 H11 M14.5 1.5 L11 5 M1.5 9 V12.5 M14.5 9 V12.5"/></svg>

<div class="ri" style="top:481px;left:21px"><svg class="a" style="left:10px;top:14px" width="24" height="31" viewBox="0 0 24 31">
 <path d="M0.6 0.6 H18 L22.4 5 V28.9 H0.6 Z" fill="#fff" stroke="#fb4c0f" stroke-width="1.2"/>
 <path d="M18 0.6 V5 H22.4 Z" fill="#fb4c0f"/>
 <path d="M5.3 5.9 L10.7 6.4 L8.2 8.6 Z M11 16.8 L15.9 16.9 L13.8 14.6 Z M6 16.9 C6.5 11 11 7 17.5 6 C16.5 11.5 12 15.5 6 16.9 Z" fill="#fb4c0f"/>
 <text x="11.5" y="26" text-anchor="middle" font-family="Liberation Sans" font-size="8.2" textLength="15" lengthAdjust="spacingAndGlyphs" fill="#fb4c0f">PDF</text>
</svg>
<div class="rt">怎么面对高中学习</div><div class="rd">2024-11-21</div></div>
<div class="ri" style="top:536px;left:21px"><svg class="a" style="left:10px;top:14px" width="24" height="31" viewBox="0 0 24 31">
 <path d="M0.6 0.6 H18 L22.4 5 V28.9 H0.6 Z" fill="#fff" stroke="#fb4c0f" stroke-width="1.2"/>
 <path d="M18 0.6 V5 H22.4 Z" fill="#fb4c0f"/>
 <path d="M5.3 5.9 L10.7 6.4 L8.2 8.6 Z M11 16.8 L15.9 16.9 L13.8 14.6 Z M6 16.9 C6.5 11 11 7 17.5 6 C16.5 11.5 12 15.5 6 16.9 Z" fill="#fb4c0f"/>
 <text x="11.5" y="26" text-anchor="middle" font-family="Liberation Sans" font-size="8.2" textLength="15" lengthAdjust="spacingAndGlyphs" fill="#fb4c0f">PDF</text>
</svg>
<div class="rt">乘客检测系统无线传...</div><div class="rd">2022-11-02</div></div>
<div class="ri" style="top:591px;left:21px"><svg class="a" style="left:10px;top:14px" width="24" height="31" viewBox="0 0 24 31">
 <path d="M0.6 0.6 H18 L22.4 5 V28.9 H0.6 Z" fill="#fff" stroke="#fb4c0f" stroke-width="1.2"/>
 <path d="M18 0.6 V5 H22.4 Z" fill="#fb4c0f"/>
 <path d="M5.3 5.9 L10.7 6.4 L8.2 8.6 Z M11 16.8 L15.9 16.9 L13.8 14.6 Z M6 16.9 C6.5 11 11 7 17.5 6 C16.5 11.5 12 15.5 6 16.9 Z" fill="#fb4c0f"/>
 <text x="11.5" y="26" text-anchor="middle" font-family="Liberation Sans" font-size="8.2" textLength="15" lengthAdjust="spacingAndGlyphs" fill="#fb4c0f">PDF</text>
</svg>
<div class="rt">你好</div><div class="rd">2024-11-24</div></div>

<div class="a" style="left:1194px;top:88px;width:6px;height:1px;background:#d0d0d0;z-index:6"></div>
<div class="a" style="left:1194px;top:121px;width:6px;height:1px;background:#d0d0d0;z-index:6"></div>
<div class="a" style="left:1194px;top:100px;width:5px;height:8px;border:2px solid #777;border-right:none;z-index:6"></div>
</body></html>
